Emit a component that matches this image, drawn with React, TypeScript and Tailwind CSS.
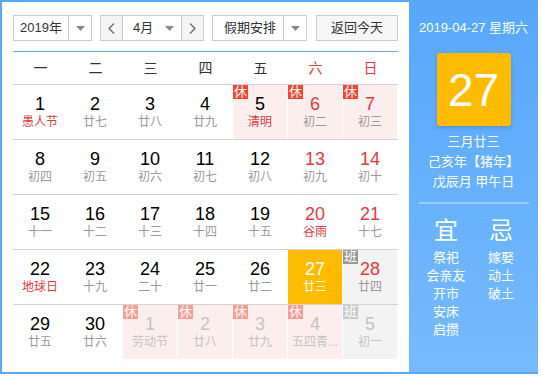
import React from 'react';

type Day = {
  n: number;
  lunar: string;
  red?: boolean;
  fest?: boolean;
  tag?: '休' | '班';
  today?: boolean;
  other?: boolean;
};

const weeks: Day[][] = [
  [
    { n: 1, lunar: '愚人节', fest: true },
    { n: 2, lunar: '廿七' },
    { n: 3, lunar: '廿八' },
    { n: 4, lunar: '廿九' },
    { n: 5, lunar: '清明', fest: true, tag: '休' },
    { n: 6, lunar: '初二', red: true, tag: '休' },
    { n: 7, lunar: '初三', red: true, tag: '休' },
  ],
  [
    { n: 8, lunar: '初四' },
    { n: 9, lunar: '初五' },
    { n: 10, lunar: '初六' },
    { n: 11, lunar: '初七' },
    { n: 12, lunar: '初八' },
    { n: 13, lunar: '初九', red: true },
    { n: 14, lunar: '初十', red: true },
  ],
  [
    { n: 15, lunar: '十一' },
    { n: 16, lunar: '十二' },
    { n: 17, lunar: '十三' },
    { n: 18, lunar: '十四' },
    { n: 19, lunar: '十五' },
    { n: 20, lunar: '谷雨', red: true, fest: true },
    { n: 21, lunar: '十七', red: true },
  ],
  [
    { n: 22, lunar: '地球日', fest: true },
    { n: 23, lunar: '十九' },
    { n: 24, lunar: '二十' },
    { n: 25, lunar: '廿一' },
    { n: 26, lunar: '廿二' },
    { n: 27, lunar: '廿三', today: true },
    { n: 28, lunar: '廿四', red: true, tag: '班' },
  ],
  [
    { n: 29, lunar: '廿五' },
    { n: 30, lunar: '廿六' },
    { n: 1, lunar: '劳动节', tag: '休', other: true },
    { n: 2, lunar: '廿八', tag: '休', other: true },
    { n: 3, lunar: '廿九', tag: '休', other: true },
    { n: 4, lunar: '五四青...', tag: '休', other: true },
    { n: 5, lunar: '初一', tag: '班', other: true },
  ],
];

const weekdays = ['一', '二', '三', '四', '五', '六', '日'];

function Caret() {
  return (
    <svg width="9" height="5" viewBox="0 0 9 5">
      <path d="M0 0h9L4.5 5z" fill="#888" />
    </svg>
  );
}

function DayCell({ d }: { d: Day }) {
  let bg = '';
  if (d.today) bg = 'bg-[#ffbb00]';
  else if (d.tag === '休') bg = 'bg-[#fdeeee]';
  else if (d.tag === '班') bg = 'bg-[#f3f3f3]';

  let num = 'text-black';
  if (d.today) num = 'text-white';
  else if (d.other) num = 'text-[#c4c4c4]';
  else if (d.red) num = 'text-[#e8383d]';

  let sub = 'text-[#999]';
  if (d.today) sub = 'text-white';
  else if (d.other) sub = 'text-[#c4c4c4]';
  else if (d.fest) sub = 'text-[#e8383d]';

  let badge = '';
  if (d.tag === '休') badge = d.other ? 'bg-[#fa9c94]' : 'bg-[#f5452f]';
  if (d.tag === '班') badge = d.other ? 'bg-[#c9c9c9]' : 'bg-[#999]';

  return (
    <div className="w-[55px] h-[54px] pr-px">
      <div className={`relative h-full flex flex-col items-center justify-center ${bg}`}>
        {d.tag && (
          <span className={`absolute left-0 top-0 w-[15px] h-[14px] text-[13px] leading-[14px] text-white text-center ${badge}`}>
            {d.tag}
          </span>
        )}
        <span className={`text-[18px] leading-[20px] ${num}`}>{d.n}</span>
        <span className={`text-[12px] leading-[16px] whitespace-nowrap ${sub}`}>{d.lunar}</span>
      </div>
    </div>
  );
}

export default function App() {
  return (
    <div
      className="w-[538px] h-[374px] border-y-2 border-l-2 border-[#5aa8fa] flex bg-white text-[#333]"
      style={{ fontFamily: '"Liberation Sans", "Noto Sans CJK SC", sans-serif' }}
    >
      {/* calendar */}
      <div className="w-[407px] pl-[11px] pt-[13px]">
        <div className="flex h-[26px] text-[13px]">
          <div className="w-[79px] border border-[#ccc] flex">
            <div className="w-[54px] flex items-center justify-center">2019年</div>
            <div className="flex-1 border-l border-[#ccc] flex items-center justify-center">
              <Caret />
            </div>
          </div>
          <div className="ml-2 w-[104px] border border-[#ccc] flex">
            <div className="w-[21px] bg-[#f5f5f5] flex items-center justify-center">
              <svg width="7" height="11" viewBox="0 0 7 11">
                <path d="M6 0.5L1 5.5l5 5" fill="none" stroke="#666" strokeWidth="1.2" />
              </svg>
            </div>
            <div className="flex-1 border-x border-[#ccc] flex items-center justify-between pl-[10px] pr-[7px]">
              <span>4月</span>
              <Caret />
            </div>
            <div className="w-[21px] bg-[#f5f5f5] flex items-center justify-center">
              <svg width="7" height="11" viewBox="0 0 7 11">
                <path d="M1 0.5l5 5-5 5" fill="none" stroke="#666" strokeWidth="1.2" />
              </svg>
            </div>
          </div>
          <div className="ml-2 w-[95px] border border-[#ccc] flex">
            <div className="w-[70px] flex items-center pl-[11px]">假期安排</div>
            <div className="flex-1 border-l border-[#ccc] flex items-center justify-center">
              <Caret />
            </div>
          </div>
          <div className="ml-[9px] w-[82px] border border-[#ccc] bg-[#f7f7f7] flex items-center justify-center">
            返回今天
          </div>
        </div>

        <div className="w-[385px] mt-[10px] h-px bg-[#5ea8f3]" />

        <div className="w-[385px] grid grid-cols-7 h-[33px] border-b border-[#d3d3d3] text-[14px]">
          {weekdays.map((w, i) => (
            <div key={w} className={`flex items-center justify-center ${i > 4 ? 'text-[#e8383d]' : 'text-[#333]'}`}>
              {w}
            </div>
          ))}
        </div>

        <div className="w-[385px]">
          {weeks.map((row, i) => (
            <div key={i} className={`flex ${i < weeks.length - 1 ? 'border-b border-[#d3d3d3]' : ''}`}>
              {row.map((d, j) => (
                <DayCell key={j} d={d} />
              ))}
            </div>
          ))}
        </div>
      </div>

      {/* side panel */}
      <div className="flex-1 bg-gradient-to-b from-[#57a7fb] to-[#76bafd] text-white flex flex-col items-center pt-4">
        <div className="text-[13px] leading-[20px]">2019-04-27 星期六</div>
        <div className="mt-[15px] w-[74px] h-[73px] rounded-[3px] bg-[#ffbb00] shadow-[0_2px_4px_rgba(0,0,0,0.15)] flex items-center justify-center text-[46px] leading-none">
          27
        </div>
        <div className="mt-[6px] text-[13px] leading-[20px] text-center">
          <div>三月廿三</div>
          <div>己亥年【猪年】</div>
          <div>戊辰月 甲午日</div>
        </div>
        <div className="mt-[10px] w-[110px] h-[2px] bg-white/35" />
        <div className="mt-[13px] w-[110px] grid grid-cols-2 text-center">
          <div>
            <div className="text-[24px] leading-[28px]">宜</div>
            <div className="mt-[4px] text-[13px] leading-[18px]">
              <div>祭祀</div>
              <div>会亲友</div>
              <div>开市</div>
              <div>安床</div>
              <div>启攒</div>
            </div>
          </div>
          <div>
            <div className="text-[24px] leading-[28px]">忌</div>
            <div className="mt-[4px] text-[13px] leading-[18px]">
              <div>嫁娶</div>
              <div>动土</div>
              <div>破土</div>
            </div>
          </div>
        </div>
      </div>
    </div>
  );
}
